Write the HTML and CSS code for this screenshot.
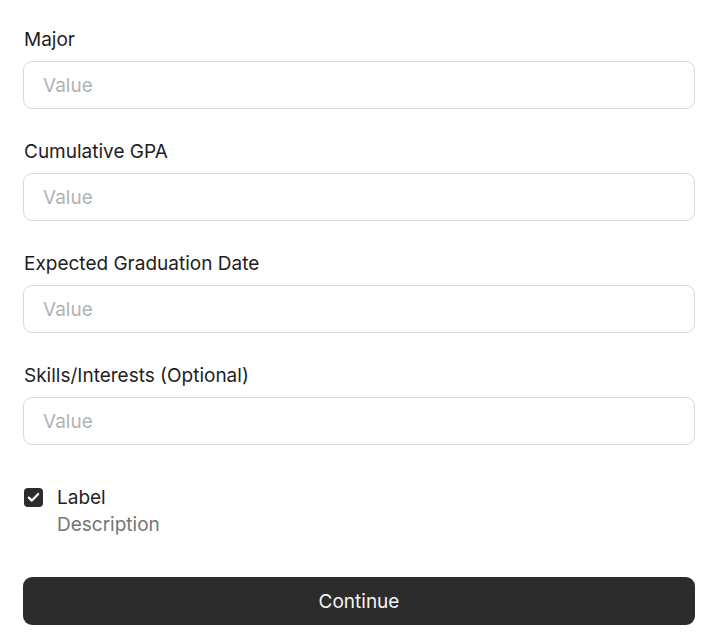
FILE: index.html
```html
<!DOCTYPE html>
<html>
<head>
<meta charset="utf-8">
<link rel="stylesheet" href="styles.css">
</head>
<body>
<form class="form">
  <div class="field">
    <label class="label">Major</label>
    <div class="input"><span class="placeholder">Value</span></div>
  </div>
  <div class="field">
    <label class="label">Cumulative GPA</label>
    <div class="input"><span class="placeholder">Value</span></div>
  </div>
  <div class="field">
    <label class="label">Expected Graduation Date</label>
    <div class="input"><span class="placeholder">Value</span></div>
  </div>
  <div class="field">
    <label class="label">Skills/Interests (Optional)</label>
    <div class="input"><span class="placeholder">Value</span></div>
  </div>
  <div class="check">
    <span class="box">
      <svg width="13" height="11" viewBox="0 0 13 11"><path d="M1.8 5.6 L4.9 8.6 L11.2 2" fill="none" stroke="#fff" stroke-width="2.2" stroke-linecap="round" stroke-linejoin="round"/></svg>
    </span>
    <div class="check-text">
      <div class="check-label">Label</div>
      <div class="check-desc">Description</div>
    </div>
  </div>
  <div class="button">Continue</div>
</form>
</body>
</html>
```
FILE: styles.css
```css
* { box-sizing: border-box; }
html, body { margin: 0; padding: 0; background: #fff; }
body { font-family: Inter, "Noto Sans", sans-serif; color: #1e1e1e; }
.form {
  display: flex;
  flex-direction: column;
  padding: 28px 21px 0 23px;
}
.field {
  display: flex;
  flex-direction: column;
  gap: 10px;
  margin-bottom: 31px;
}
.label {
  font-size: 19px;
  line-height: 23px;
  color: #1e1e1e;
  padding-left: 1px;
}
.input {
  height: 48px;
  border: 1px solid #d9d9d9;
  border-radius: 9px;
  padding: 0 19px;
  display: flex;
  align-items: center;
}
.placeholder {
  font-size: 19px;
  color: #b3b3b3;
}
.check {
  display: flex;
  gap: 14px;
  padding-left: 1px;
  margin-top: 10px;
}
.box {
  width: 19px;
  height: 19px;
  border-radius: 4px;
  background: #2c2c2c;
  display: flex;
  align-items: center;
  justify-content: center;
  margin-top: 2px;
}
.check-label {
  font-size: 19px;
  line-height: 23px;
  color: #1e1e1e;
}
.check-desc {
  font-size: 19px;
  line-height: 28px;
  padding-top: 2px;
  color: #757575;
}
.button {
  margin-top: 38px;
  height: 48px;
  border-radius: 9px;
  background: #2c2c2c;
  color: #f5f5f5;
  font-size: 19px;
  display: flex;
  align-items: center;
  justify-content: center;
}
```
